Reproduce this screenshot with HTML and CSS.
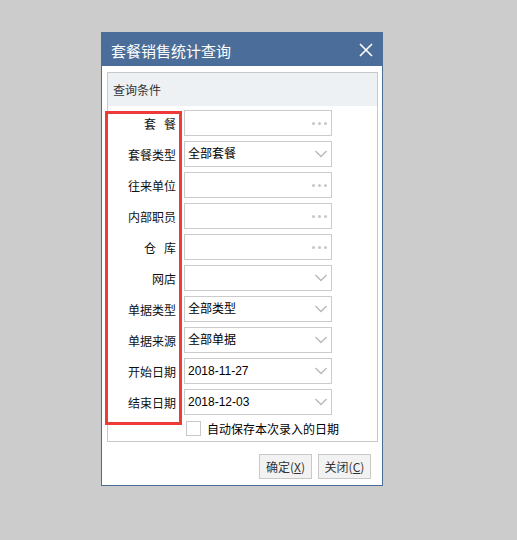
FILE: index.html
```html
<!DOCTYPE html>
<html lang="zh-CN">
<head>
<meta charset="utf-8">
<title>套餐销售统计查询</title>
<link rel="stylesheet" href="styles.css">
</head>
<body>
<div class="dialog">
  <div class="titlebar">
    <span class="title">套餐销售统计查询</span>
    <svg class="close" width="14" height="14" viewBox="0 0 14 14"><path d="M1 1 L13 13 M13 1 L1 13" stroke="#fff" stroke-width="1.6" fill="none"/></svg>
  </div>
  <div class="content">
    <div class="group">
      <div class="group-head">查询条件</div>
      <div class="form">
        <div class="row"><label class="lbl"><span class="gap">套</span>餐</label><div class="field"><span class="val"></span><span class="dots"><i></i><i></i><i></i></span></div></div>
        <div class="row"><label class="lbl">套餐类型</label><div class="field"><span class="val">全部套餐</span><svg class="chev" width="12" height="8" viewBox="0 0 12 8"><path d="M0.5 1 L6 6.5 L11.5 1" stroke="#b9b9b9" stroke-width="1.4" fill="none"/></svg></div></div>
        <div class="row"><label class="lbl">往来单位</label><div class="field"><span class="val"></span><span class="dots"><i></i><i></i><i></i></span></div></div>
        <div class="row"><label class="lbl">内部职员</label><div class="field"><span class="val"></span><span class="dots"><i></i><i></i><i></i></span></div></div>
        <div class="row"><label class="lbl"><span class="gap">仓</span>库</label><div class="field"><span class="val"></span><span class="dots"><i></i><i></i><i></i></span></div></div>
        <div class="row"><label class="lbl">网店</label><div class="field"><span class="val"></span><svg class="chev" width="12" height="8" viewBox="0 0 12 8"><path d="M0.5 1 L6 6.5 L11.5 1" stroke="#b9b9b9" stroke-width="1.4" fill="none"/></svg></div></div>
        <div class="row"><label class="lbl">单据类型</label><div class="field"><span class="val">全部类型</span><svg class="chev" width="12" height="8" viewBox="0 0 12 8"><path d="M0.5 1 L6 6.5 L11.5 1" stroke="#b9b9b9" stroke-width="1.4" fill="none"/></svg></div></div>
        <div class="row"><label class="lbl">单据来源</label><div class="field"><span class="val">全部单据</span><svg class="chev" width="12" height="8" viewBox="0 0 12 8"><path d="M0.5 1 L6 6.5 L11.5 1" stroke="#b9b9b9" stroke-width="1.4" fill="none"/></svg></div></div>
        <div class="row"><label class="lbl">开始日期</label><div class="field"><span class="val">2018-11-27</span><svg class="chev" width="12" height="8" viewBox="0 0 12 8"><path d="M0.5 1 L6 6.5 L11.5 1" stroke="#b9b9b9" stroke-width="1.4" fill="none"/></svg></div></div>
        <div class="row"><label class="lbl">结束日期</label><div class="field"><span class="val">2018-12-03</span><svg class="chev" width="12" height="8" viewBox="0 0 12 8"><path d="M0.5 1 L6 6.5 L11.5 1" stroke="#b9b9b9" stroke-width="1.4" fill="none"/></svg></div></div>
        <div class="check-row"><span class="box"></span><span class="check-text">自动保存本次录入的日期</span></div>
      </div>
    </div>
    <div class="buttons">
      <button class="btn">确定(<u>X</u>)</button>
      <button class="btn">关闭(<u>C</u>)</button>
    </div>
    <div class="highlight"></div>
  </div>
</div>
</body>
</html>
```

FILE: styles.css
```css
html, body {
  margin: 0;
  padding: 0;
  background: #cccccc;
}
body {
  padding: 32px 0 0 101px;
  font-family: "Microsoft YaHei", "Liberation Sans", "Noto Sans CJK SC", sans-serif;
  font-size: 12px;
  color: #111;
}
.dialog {
  width: 282px;
  box-sizing: border-box;
  border: 1px solid #4a6d98;
  background: #fff;
}
.titlebar {
  height: 33px;
  background: #4a6e99;
  display: flex;
  align-items: center;
  justify-content: space-between;
  padding: 2px 9px 0 9px;
  box-sizing: border-box;
}
.title {
  color: #fff;
  font-size: 15px;
  line-height: 20px;
  font-family: "Microsoft YaHei", "Noto Sans CJK SC", sans-serif;
}
.close {
  display: block;
  margin-top: -1px;
}
.content {
  position: relative;
  padding: 6px 4px 6px 5px;
}
.group {
  border: 1px solid #c9c9c9;
  height: 370px;
  box-sizing: border-box;
}
.group-head {
  height: 33px;
  background: #eef1f4;
  padding: 1px 0 0 5px;
  box-sizing: border-box;
  line-height: 32px;
  color: #333;
  font-family: "Microsoft YaHei", "Noto Sans CJK SC", sans-serif;
}
.form {
  padding-top: 4px;
  display: flex;
  flex-direction: column;
  gap: 5px;
}
.row {
  display: flex;
  height: 26px;
  gap: 8px;
}
.lbl {
  width: 68px;
  text-align: right;
  line-height: 27px;
  color: #111;
  font-family: "Microsoft YaHei", "Noto Sans CJK SC", sans-serif;
}
.gap {
  margin-right: 8px;
}
.field {
  width: 148px;
  box-sizing: border-box;
  border: 1px solid #cbcbcb;
  display: flex;
  align-items: center;
  justify-content: space-between;
  padding: 0 4px 0 3px;
}
.val {
  line-height: 24px;
  color: #000;
}
.chev {
  display: block;
  margin-top: -1px;
}
.dots {
  display: flex;
  gap: 3px;
  margin-right: 0;
  padding-top: 1px;
}
.dots i {
  display: block;
  width: 3px;
  height: 3px;
  border-radius: 50%;
  background: #c6c6c6;
}
.check-row {
  display: flex;
  align-items: center;
  gap: 6px;
  margin-top: 1px;
  padding-left: 78px;
  height: 15px;
}
.box {
  width: 15px;
  height: 15px;
  box-sizing: border-box;
  border: 1px solid #c9c9c9;
  background: #fff;
}
.check-text {
  line-height: 16px;
  color: #000;
  font-family: "Microsoft YaHei", "Noto Sans CJK SC", sans-serif;
}
.buttons {
  display: flex;
  justify-content: flex-end;
  gap: 6px;
  margin-top: 12px;
  padding-right: 7px;
}
.btn {
  width: 53px;
  height: 25px;
  box-sizing: border-box;
  border: 1px solid #c9c9c9;
  background: #f2f2f2;
  color: #333;
  font-family: "Microsoft YaHei", "Noto Sans CJK SC", sans-serif;
  font-size: 12px;
  padding: 0;
  line-height: 22px;
}
.highlight {
  position: absolute;
  left: 3px;
  top: 45px;
  width: 77px;
  height: 314px;
  box-sizing: border-box;
  border: 3px solid #ef3a3a;
  pointer-events: none;
}
```
